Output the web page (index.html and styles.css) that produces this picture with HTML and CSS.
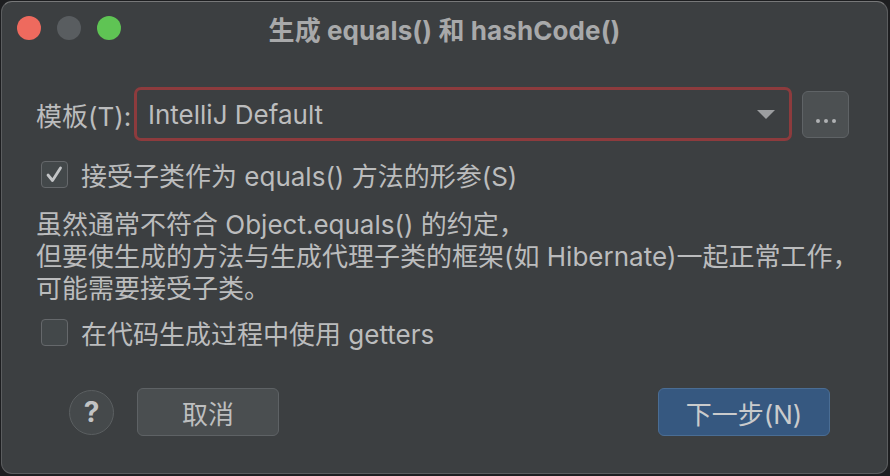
FILE: index.html
```html
<!DOCTYPE html>
<html lang="zh-CN">
<head>
<meta charset="utf-8">
<title>生成 equals() 和 hashCode()</title>
<link rel="stylesheet" href="styles.css">
</head>
<body>
<div class="window">
  <div class="titlebar">
    <div class="lights">
      <span class="light red"></span>
      <span class="light gray"></span>
      <span class="light green"></span>
    </div>
    <div class="title">生成 equals() 和 hashCode()</div>
    <div></div>
  </div>
  <div class="content">
    <div class="template-row">
      <label class="field-label">模板(T):</label>
      <div class="combo">
        <span class="combo-text">IntelliJ Default</span>
        <svg class="combo-arrow" width="18" height="9" viewBox="0 0 18 9"><path d="M0 0 H18 L9 9 Z" fill="#9c9ea0"/></svg>
      </div>
      <div class="more-btn"><span class="dot"></span><span class="dot"></span><span class="dot"></span></div>
    </div>
    <div class="check-row first">
      <span class="checkbox">
        <svg width="27" height="27" viewBox="0 0 27 27"><path d="M7 14 L11.5 19.5 L19.5 7" fill="none" stroke="#c3c5c7" stroke-width="2.8" stroke-linecap="round" stroke-linejoin="round"/></svg>
      </span>
      <span class="check-text">接受子类作为 equals() 方法的形参(S)</span>
    </div>
    <div class="desc">
      <div>虽然通常不符合 Object.equals() 的约定，</div>
      <div>但要使生成的方法与生成代理子类的框架(如 Hibernate)一起正常工作，</div>
      <div>可能需要接受子类。</div>
    </div>
    <div class="check-row second">
      <span class="checkbox"></span>
      <span class="check-text">在代码生成过程中使用 getters</span>
    </div>
    <div class="button-row">
      <div class="help">?</div>
      <div class="btn cancel">取消</div>
      <div class="spacer"></div>
      <div class="btn primary">下一步(N)</div>
    </div>
  </div>
</div>
</body>
</html>
```

FILE: styles.css
```css
* { box-sizing: border-box; }
html, body { margin: 0; padding: 0; }
body {
  background: #1d1e20;
  width: 890px;
  height: 476px;
  padding: 1px 1px 0 1px;
  font-family: "Inter", "Noto Sans CJK SC", sans-serif;
  color: #bbbcbd;
  overflow: hidden;
}
.window {
  width: 887px;
  height: 473px;
  background: #3c3f41;
  border: 1px solid #5b5d5f;
  border-top-color: #777879;
  border-radius: 11px;
  display: flex;
  flex-direction: column;
}
.titlebar {
  height: 52px;
  display: grid;
  grid-template-columns: 1fr auto 1fr;
  align-items: center;
}
.lights {
  display: flex;
  gap: 16px;
  padding-left: 15px;
}
.light {
  width: 24px;
  height: 24px;
  border-radius: 50%;
  display: block;
}
.light.red { background: #ee6a5e; }
.light.gray { background: #595d60; }
.light.green { background: #5fc454; }
.title {
  font-size: 26px;
  font-weight: 700;
  color: #a8a9aa;
  white-space: nowrap;
  letter-spacing: 0.1px;
}
.content {
  padding: 0 38px 0 34px;
  display: flex;
  flex-direction: column;
}
.template-row {
  margin-top: 33px;
  height: 54px;
  display: flex;
  align-items: center;
}
.field-label {
  width: 98px;
  font-size: 26px;
  white-space: nowrap;
}
.combo {
  flex: 1;
  height: 54px;
  border: 3px solid #8d3b3d;
  border-radius: 7px;
  background: #3c3f41;
  display: flex;
  align-items: center;
  padding: 0 14px 0 11px;
}
.combo-text {
  flex: 1;
  font-size: 26px;
  color: #bcbdbe;
}
.combo-arrow { display: block; }
.more-btn {
  width: 47px;
  height: 47px;
  margin-left: 10px;
  background: #4c5052;
  border: 1px solid #5f6366;
  border-radius: 6px;
  display: flex;
  justify-content: center;
  align-items: flex-end;
  gap: 4px;
  padding-bottom: 14px;
}
.dot {
  width: 4px;
  height: 4px;
  border-radius: 50%;
  background: #b0b2b4;
  display: block;
}
.check-row {
  height: 34px;
  display: flex;
  align-items: center;
  padding-left: 5px;
  gap: 13px;
  white-space: nowrap;
}
.check-row.first { margin-top: 16px; }
.check-row.second { margin-top: 10px; }
.checkbox {
  width: 27px;
  height: 27px;
  border: 1px solid #65686b;
  border-radius: 4px;
  background: #43484a;
  display: block;
  flex: none;
  position: relative;
}
.checkbox svg { position: absolute; left: -1px; top: -1px; }
.check-text { font-size: 26px; }
.desc {
  margin-top: 18px;
  font-size: 26px;
  line-height: 32px;
  white-space: nowrap;
}
.button-row {
  margin-top: 39px;
  display: flex;
  align-items: center;
  padding-left: 33px;
  padding-right: 19px;
}
.help {
  width: 45px;
  height: 45px;
  border-radius: 50%;
  background: #45494b;
  border: 1px solid #5b5f61;
  display: flex;
  align-items: center;
  justify-content: center;
  font-size: 28px;
  font-weight: 700;
  color: #c2c3c4;
}
.btn {
  height: 48px;
  border-radius: 6px;
  display: flex;
  align-items: center;
  justify-content: center;
  font-size: 26px;
  white-space: nowrap;
}
.cancel {
  width: 142px;
  margin-left: 23px;
  background: #4a4e50;
  border: 1px solid #5e6265;
  color: #bdbebf;
}
.spacer { flex: 1; }
.primary {
  width: 172px;
  background: #365880;
  border: 1px solid #4a6d94;
  color: #cacbcc;
}
```
